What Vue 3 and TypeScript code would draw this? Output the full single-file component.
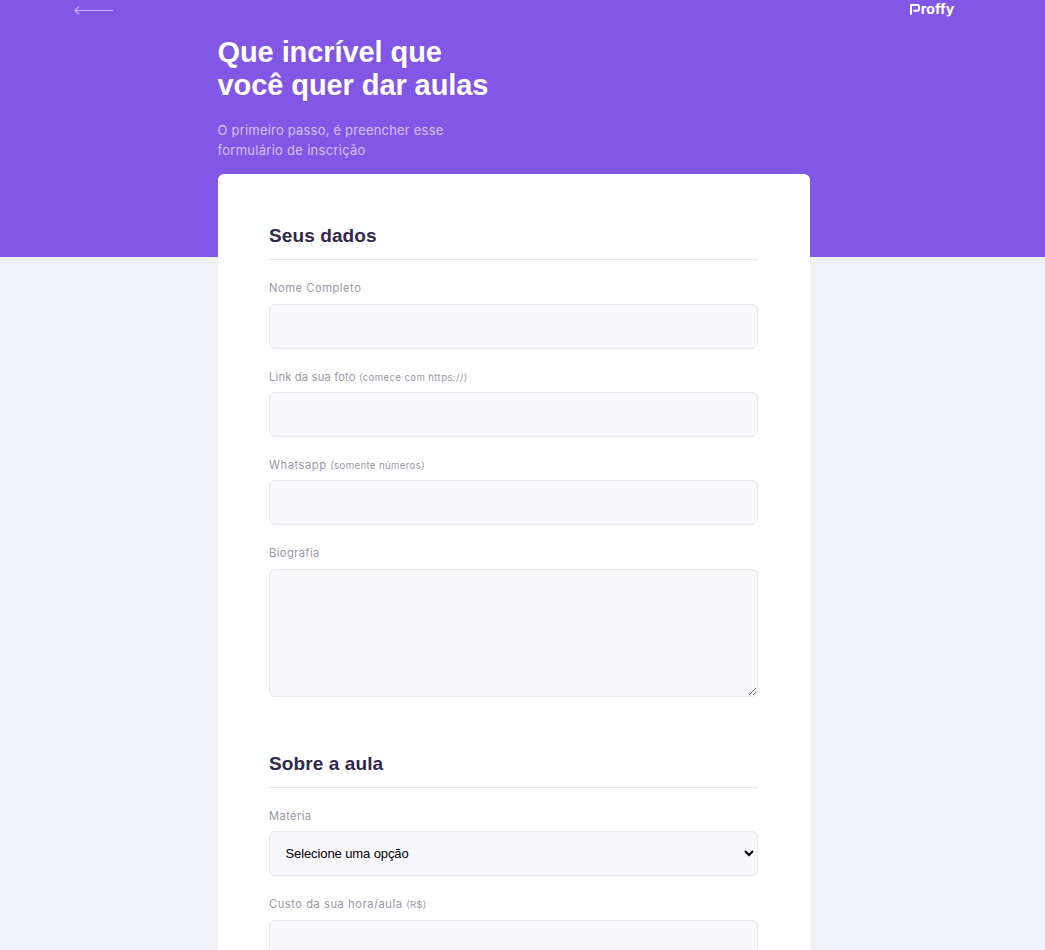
<script setup lang="ts">
import { ref } from 'vue'

const name = ref('')
const avatar = ref('')
const whatsapp = ref('')
const bio = ref('')
const subject = ref('')
const cost = ref('')

const subjects: string[] = ['Artes', 'Biologia', 'Ciências', 'Física', 'Geografia', 'História', 'Matemática', 'Português', 'Química']
</script>

<template>
  <div class="page">
    <header class="page-header">
      <div class="top-bar">
        <a href="#" class="back" aria-label="Voltar">
          <svg width="40" height="11" viewBox="0 0 40 11" fill="none">
            <path d="M39 5.5H1.2M5 1.5L1 5.5l4 4" stroke="currentColor" stroke-width="1.2" />
          </svg>
        </a>
        <svg class="logo" width="48" height="20" viewBox="0 0 48 20" role="img" aria-label="Proffy">
          <path d="M3 14.8V5H9.4Q11 5 11 6.6V9.2Q11 10.8 9.4 10.8H5.4" fill="none" stroke="currentColor" stroke-width="2" />
          <text x="12.8" y="14" textLength="33.4" lengthAdjust="spacingAndGlyphs">roffy</text>
        </svg>
      </div>
      <div class="intro">
        <h1>Que incrível que<br />você quer dar aulas</h1>
        <p>O primeiro passo, é preencher esse<br /><span>formulário de inscrição</span></p>
      </div>
    </header>

    <main class="card">
      <form @submit.prevent>
        <section class="group">
          <h2>Seus dados</h2>
          <div class="field">
            <label for="name" class="wide">Nome Completo</label>
            <input id="name" v-model="name" />
          </div>
          <div class="field">
            <label for="avatar" class="tight">Link da sua foto <small>(comece com https://)</small></label>
            <input id="avatar" v-model="avatar" type="url" />
          </div>
          <div class="field">
            <label for="whatsapp" class="wide">Whatsapp <small>(somente números)</small></label>
            <input id="whatsapp" v-model="whatsapp" />
          </div>
          <div class="field">
            <label for="bio">Biografia</label>
            <textarea id="bio" v-model="bio"></textarea>
          </div>
        </section>

        <section class="group">
          <h2>Sobre a aula</h2>
          <div class="field">
            <label for="subject">Matéria</label>
            <select id="subject" v-model="subject">
              <option value="">Selecione uma opção</option>
              <option v-for="s in subjects" :key="s" :value="s">{{ s }}</option>
            </select>
          </div>
          <div class="field">
            <label for="cost" class="wide">Custo da sua hora/aula <small class="unit">(R$)</small></label>
            <input id="cost" v-model="cost" />
          </div>
        </section>
      </form>
    </main>
  </div>
</template>

<style>
html,
body {
  margin: 0;
  background: #f0f0f7;
}
</style>

<style scoped>
.page {
  height: 950px;
  overflow: hidden;
  background: #f0f0f7;
  font-family: Inter, "Liberation Sans", sans-serif;
}
.page * {
  box-sizing: border-box;
}
.page-header {
  height: 257px;
  background: #8257e5;
  color: #fff;
}
.top-bar {
  display: flex;
  justify-content: space-between;
  align-items: center;
  height: 20px;
  padding: 0 89px 0 74px;
}
.back {
  display: flex;
  padding-top: 1px;
  color: #c5aff5;
}
.back svg {
  display: block;
}
.logo {
  display: block;
  color: #fff;
}
.logo text {
  fill: currentColor;
  font: 700 13px Inter, sans-serif;
}
.intro {
  width: 592px;
  margin-left: 217.5px;
  padding-top: 16px;
}
h1 {
  margin: 0;
  font: 700 29px/33px "Liberation Sans", sans-serif;
  letter-spacing: -0.08px;
}
.intro p {
  margin: 18px 0 0;
  color: #d4c2ff;
  font-size: 13px;
  line-height: 20px;
  letter-spacing: 0.2px;
}
.intro p span {
  letter-spacing: 0.28px;
}
.card {
  width: 592px;
  height: 900px;
  margin: -83px 0 0 218px;
  padding: 51px 52px 0 51px;
  border-radius: 6px;
  background: #fff;
  position: relative;
}
.group + .group {
  margin-top: 54.6px;
}
h2 {
  margin: 0 0 20.4px;
  height: 35px;
  border-bottom: 1px solid #e6e6f0;
  color: #32264d;
  font: 700 19px/21px "Liberation Sans", sans-serif;
  letter-spacing: 0.1px;
}
.group + .group h2 {
  height: 37px;
  margin-bottom: 19.6px;
  padding-top: 2px;
}
.field + .field {
  margin-top: 19.6px;
}
label {
  display: block;
  height: 17px;
  margin-bottom: 6.6px;
  color: #9c98a6;
  font-size: 11.2px;
  line-height: 17px;
  letter-spacing: 0.38px;
  white-space: nowrap;
}
label.wide {
  letter-spacing: 0.52px;
}
label.tight {
  letter-spacing: 0.17px;
}
small {
  font-size: 9.6px;
  letter-spacing: 0.38px;
}
small.unit {
  letter-spacing: 0.25px;
}
input,
select,
textarea {
  display: block;
  width: 100%;
  height: 45px;
  margin: 0;
  padding: 0 16px;
  border: 1px solid #e6e6f0;
  border-radius: 6px;
  outline: 0;
  background: #f8f8fc;
  color: #000;
  font: 13px "Liberation Sans", sans-serif;
}
select {
  padding: 0 1px 0 11.5px;
  letter-spacing: -0.1px;
}
textarea {
  height: 128px;
  padding: 16px;
  resize: vertical;
}
</style>
